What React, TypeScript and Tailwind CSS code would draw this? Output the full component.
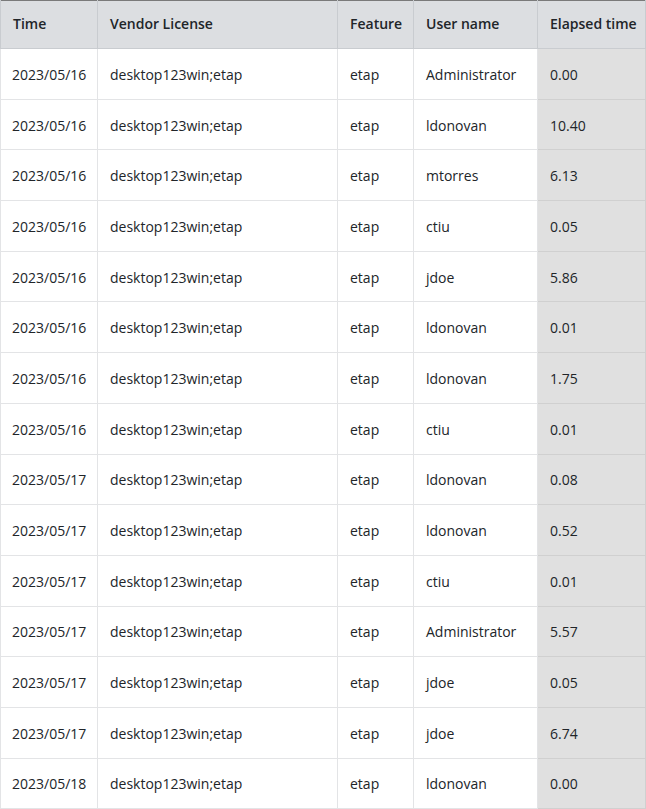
import React from 'react';

const rows = [
  ['2023/05/16', 'Administrator', '0.00'],
  ['2023/05/16', 'ldonovan', '10.40'],
  ['2023/05/16', 'mtorres', '6.13'],
  ['2023/05/16', 'ctiu', '0.05'],
  ['2023/05/16', 'jdoe', '5.86'],
  ['2023/05/16', 'ldonovan', '0.01'],
  ['2023/05/16', 'ldonovan', '1.75'],
  ['2023/05/16', 'ctiu', '0.01'],
  ['2023/05/17', 'ldonovan', '0.08'],
  ['2023/05/17', 'ldonovan', '0.52'],
  ['2023/05/17', 'ctiu', '0.01'],
  ['2023/05/17', 'Administrator', '5.57'],
  ['2023/05/17', 'jdoe', '0.05'],
  ['2023/05/17', 'jdoe', '6.74'],
  ['2023/05/18', 'ldonovan', '0.00'],
];

const App = () => {
  return (
    <div className="w-[646px] h-[809px] overflow-hidden bg-white" style={{ fontFamily: '"Open Sans", sans-serif' }}>
      <table className="w-full table-fixed border-collapse border border-[#7a7a7a] text-[14px] text-[#212529]">
        <colgroup>
          <col className="w-[97px]" />
          <col className="w-[240px]" />
          <col className="w-[76px]" />
          <col className="w-[124px]" />
          <col />
        </colgroup>
        <thead>
          <tr className="h-[48px] bg-[#dcdee1] text-left">
            {['Time', 'Vendor License', 'Feature', 'User name', 'Elapsed time'].map((h) => (
              <th key={h} className="pl-3 pr-2 pb-[2px] font-semibold whitespace-nowrap border border-[#c9ccd0] border-t-0">
                {h}
              </th>
            ))}
          </tr>
        </thead>
        <tbody>
          {rows.map(([date, user, elapsed], i) => (
            <tr key={i} className="h-[50.7px]">
              <td className="pl-[11px] pr-2 pt-px border border-[#e3e4e6]">{date}</td>
              <td className="px-3 pt-px border border-[#e3e4e6]">desktop123win;etap</td>
              <td className="px-3 pt-px border border-[#e3e4e6]">etap</td>
              <td className="px-3 pt-px border border-[#e3e4e6]">{user}</td>
              <td className="px-3 pt-px border border-[#d0d0d0] bg-[#e0e0e0]">{elapsed}</td>
            </tr>
          ))}
        </tbody>
      </table>
    </div>
  );
};

export default App;
